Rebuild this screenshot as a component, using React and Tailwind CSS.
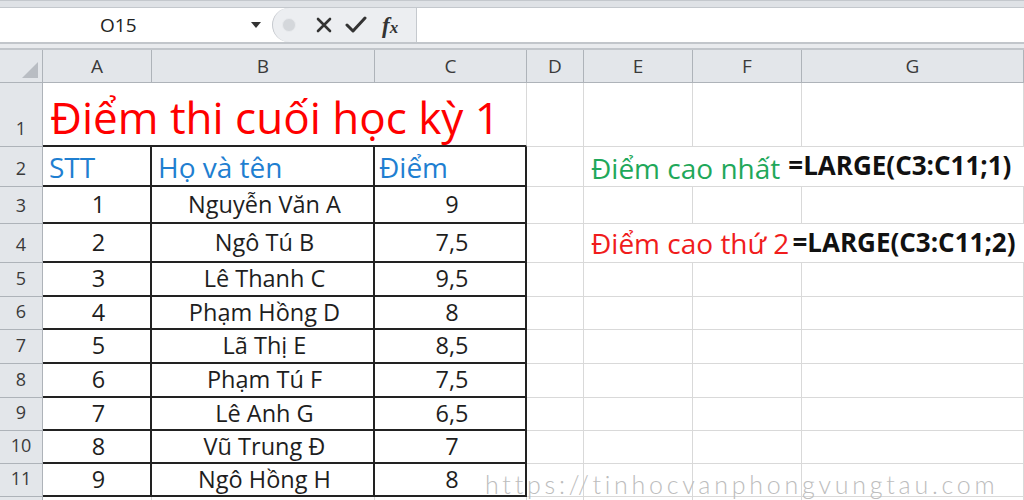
import React from "react";

const COLS = "grid-cols-[43px_109px_223px_152px_57px_109px_109px_1fr]";
const ROWS = "grid-rows-[33px_64px_40px_37px_39px_34px_33px_34px_34px_33px_33px_33px_40px]";

const data = [
  ["1", "Nguyễn Văn A", "9"],
  ["2", "Ngô Tú B", "7,5"],
  ["3", "Lê Thanh C", "9,5"],
  ["4", "Phạm Hồng D", "8"],
  ["5", "Lã Thị E", "8,5"],
  ["6", "Phạm Tú F", "7,5"],
  ["7", "Lê Anh G", "6,5"],
  ["8", "Vũ Trung Đ", "7"],
  ["9", "Ngô Hồng H", "8"],
];

const font = { fontFamily: "'Open Sans', 'Noto Sans', sans-serif" };

function ColHead({ children }) {
  return (
    <div className="flex items-center justify-center bg-[#e3e6ea] border-r border-b border-[#aeb3b9] text-[19px] text-[#3a3a3a]">
      {children}
    </div>
  );
}

function RowHead({ children }) {
  return (
    <div className="flex items-end justify-center pb-[4px] bg-[#e3e6ea] border-r border-b border-[#aeb3b9] text-[18px] text-[#3a3a3a]">
      {children}
    </div>
  );
}

function Grid({ className = "" }) {
  return <div className={`border-r border-b border-[#d9d9d9] ${className}`} />;
}

function Cell({ children }) {
  return (
    <div className="border-r-2 border-b-2 border-[#222] flex items-center justify-center pl-[4px] text-[23.5px] leading-none text-[#1e1e1e] whitespace-nowrap">
      {children}
    </div>
  );
}

export default function App() {
  return (
    <div className="w-[1024px] h-[500px] overflow-hidden bg-white relative" style={font}>
      {/* top strip */}
      <div className="h-[8px] bg-[#dfe2e6] border-t border-[#c4c8cd] border-b border-[#b9bdc3]" />
      {/* formula bar */}
      <div className="h-[34px] flex bg-white">
        <div className="w-[272px] flex items-center relative">
          <span className="ml-[100px] text-[19px] text-[#222]">O15</span>
          <span className="absolute left-[251px] top-[14px] w-0 h-0 border-l-[5px] border-r-[5px] border-t-[6px] border-l-transparent border-r-transparent border-t-[#333]" />
        </div>
        <div className="w-[145px] flex items-center bg-[#eceef1] border-l border-[#b7bbc1] rounded-l-[17px] border-r border-[#c5c9ce]">
          <span className="ml-[9px] w-[14px] h-[14px] rounded-full bg-[#d4d7db] border border-[#e8eaed]" />
          <svg className="ml-[20px]" width="16" height="16" viewBox="0 0 16 16">
            <path d="M2 2 L14 14 M14 2 L2 14" stroke="#333" strokeWidth="2.6" strokeLinecap="round" />
          </svg>
          <svg className="ml-[13px]" width="22" height="18" viewBox="0 0 22 18">
            <path d="M2 9 L8 15 L20 2" stroke="#333" strokeWidth="3" fill="none" strokeLinecap="round" strokeLinejoin="round" />
          </svg>
          <span className="ml-[15px] text-[23px] leading-none italic font-bold text-[#333]" style={{ fontFamily: "'Liberation Serif', serif" }}>
            f<span className="text-[17px]">x</span>
          </span>
        </div>
        <div className="flex-1 bg-white" />
      </div>
      <div className="h-[8px] bg-[#e9ebee] border-t-2 border-[#c2c6cb] border-b-2 border-[#b9bdc2]" />

      {/* sheet grid */}
      <div className={`grid ${COLS} ${ROWS}`}>
        {/* header row */}
        <div className="relative bg-[#e3e6ea] border-r border-b border-[#aeb3b9]">
          <svg className="absolute right-[4px] bottom-[4px]" width="16" height="16" viewBox="0 0 16 16">
            <polygon points="16,0 16,16 0,16" fill="#b9bdc3" />
          </svg>
        </div>
        <ColHead>A</ColHead>
        <ColHead>B</ColHead>
        <ColHead>C</ColHead>
        <ColHead>D</ColHead>
        <ColHead>E</ColHead>
        <ColHead>F</ColHead>
        <ColHead>G</ColHead>

        {/* row 1 */}
        <RowHead>1</RowHead>
        <div className="col-span-3 border-r border-[#d9d9d9] border-b-2 border-b-[#222] flex items-end pl-[7px] pb-[6px]">
          <span className="text-[44px] leading-none text-[#ff0000] whitespace-nowrap">Điểm thi cuối học kỳ 1</span>
        </div>
        <Grid />
        <Grid />
        <Grid />
        <Grid />

        {/* row 2 */}
        <RowHead>2</RowHead>
        <div className="border-r-2 border-b-2 border-[#222] flex items-end pl-[6px] pb-[4px] text-[28px] leading-none text-[#1f7fd1]">STT</div>
        <div className="border-r-2 border-b-2 border-[#222] flex items-end pl-[6px] pb-[4px] text-[28px] leading-none text-[#1f7fd1]">Họ và tên</div>
        <div className="border-r-2 border-b-2 border-[#222] flex items-end pl-[4px] pb-[4px] text-[28px] leading-none text-[#1f7fd1]">Điểm</div>
        <Grid />
        <div className="col-span-3 border-b border-[#d9d9d9] flex items-end pl-[7px] pb-[4px] whitespace-nowrap">
          <span className="text-[28px] leading-none text-[#1fa85a]">Điểm cao nhất</span>
          <span className="ml-[8px] text-[26px] leading-none font-bold text-[#111] mb-[4px]">=LARGE(C3:C11;1)</span>
        </div>

        {/* data rows */}
        {data.map((r, i) => (
          <React.Fragment key={i}>
            <RowHead>{i + 3}</RowHead>
            <Cell>{r[0]}</Cell>
            <Cell>{r[1]}</Cell>
            <Cell>{r[2]}</Cell>
            <Grid />
            {i === 1 ? (
              <div className="col-span-3 border-b border-[#d9d9d9] flex items-end pl-[7px] pb-[5px] whitespace-nowrap">
                <span className="text-[28px] leading-none text-[#f01c1c]">Điểm cao thứ 2</span>
                <span className="ml-[3px] text-[26px] leading-none font-bold text-[#111] mb-[2px]">=LARGE(C3:C11;2)</span>
              </div>
            ) : (
              <>
                <Grid />
                <Grid />
                <Grid />
              </>
            )}
          </React.Fragment>
        ))}

        {/* row 12 partial */}
        <div className="bg-[#e3e6ea] border-r border-b border-[#aeb3b9]" />
        <Grid />
        <Grid />
        <Grid />
        <Grid />
        <Grid />
        <Grid />
        <Grid />
      </div>

      {/* watermark overlay */}
      <div className="absolute left-[485px] top-[472px] text-[25px] leading-none font-light tracking-[3.75px] text-[#bdbdbd] whitespace-nowrap" style={{ fontFamily: "Lato, sans-serif" }}>
        https://tinhocvanphongvungtau.com
      </div>
    </div>
  );
}
